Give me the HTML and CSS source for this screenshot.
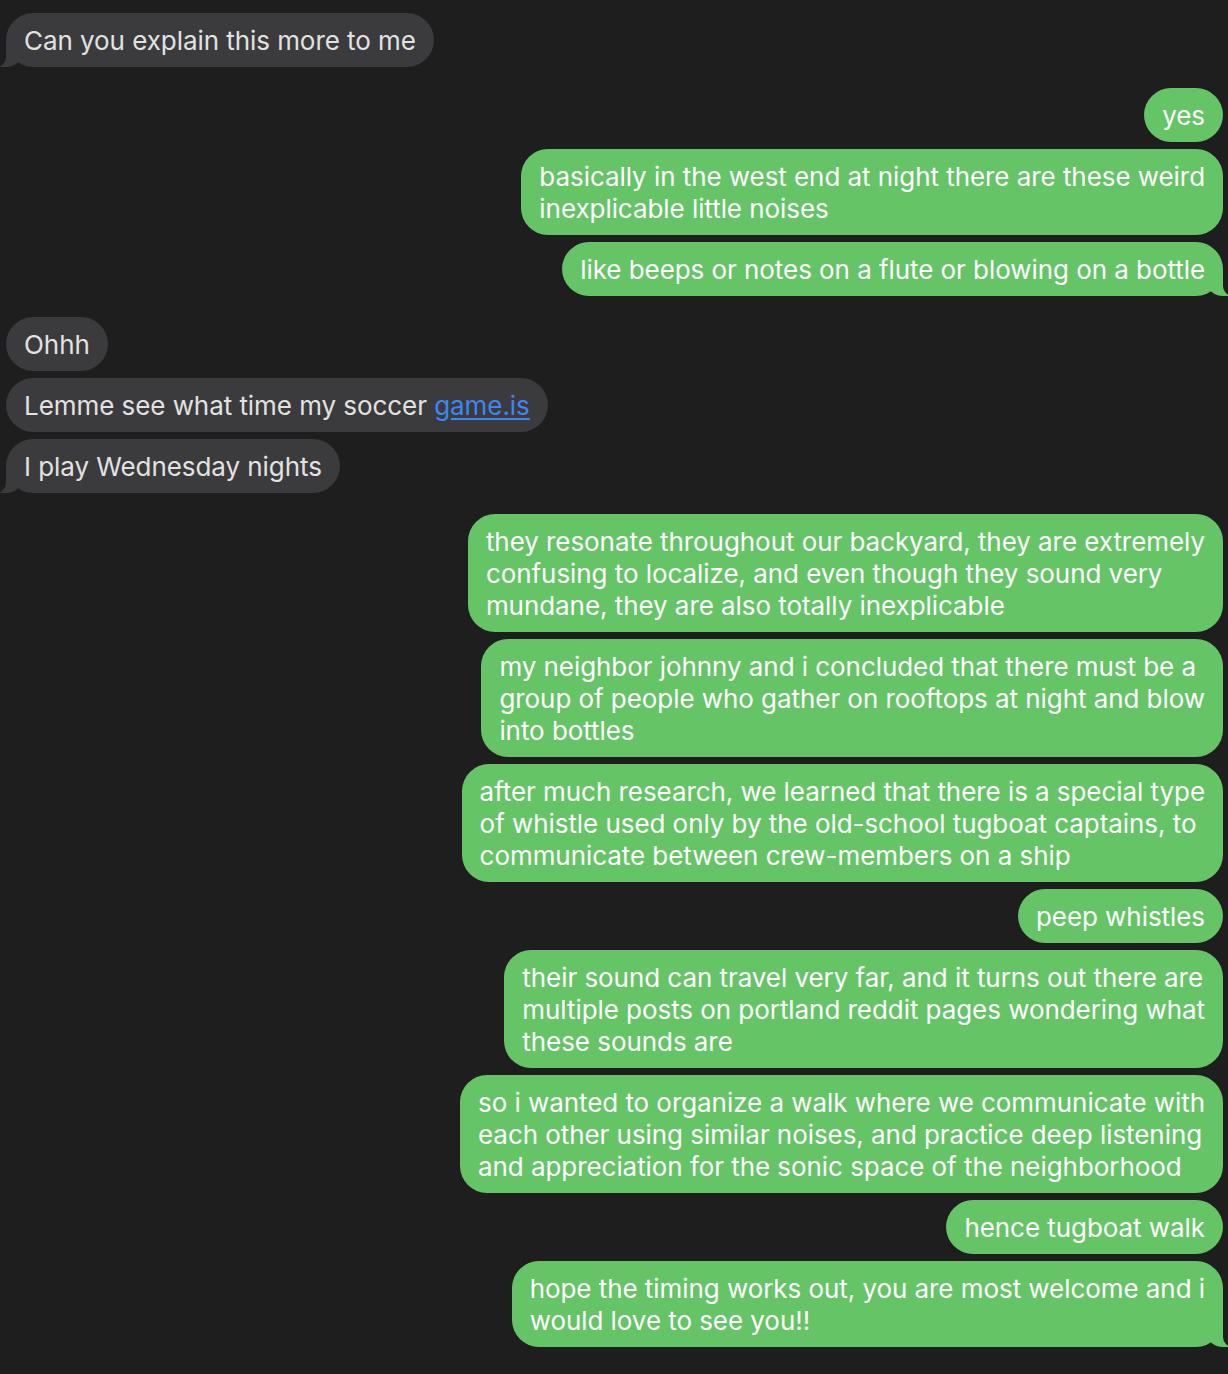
FILE: index.html
```html
<!DOCTYPE html>
<html>
<head>
<meta charset="utf-8">
<link rel="stylesheet" href="styles.css">
</head>
<body>
<div class="chat">
  <div class="group in">
    <div class="bubble tail">Can you explain this more to me</div>
  </div>
  <div class="group out">
    <div class="bubble">yes</div>
    <div class="bubble">basically in the west end at night there are these weird<br>inexplicable little noises</div>
    <div class="bubble tail">like beeps or notes on a flute or blowing on a bottle</div>
  </div>
  <div class="group in">
    <div class="bubble">Ohhh</div>
    <div class="bubble">Lemme see what time my soccer <a class="link" href="#">game.is</a></div>
    <div class="bubble tail">I play Wednesday nights</div>
  </div>
  <div class="group out">
    <div class="bubble">they resonate throughout our backyard, they are extremely<br>confusing to localize, and even though they sound very<br>mundane, they are also totally inexplicable</div>
    <div class="bubble">my neighbor johnny and i concluded that there must be a<br>group of people who gather on rooftops at night and blow<br>into bottles</div>
    <div class="bubble">after much research, we learned that there is a special type<br>of whistle used only by the old-school tugboat captains, to<br>communicate between crew-members on a ship</div>
    <div class="bubble">peep whistles</div>
    <div class="bubble">their sound can travel very far, and it turns out there are<br>multiple posts on portland reddit pages wondering what<br>these sounds are</div>
    <div class="bubble">so i wanted to organize a walk where we communicate with<br>each other using similar noises, and practice deep listening<br>and appreciation for the sonic space of the neighborhood</div>
    <div class="bubble">hence tugboat walk</div>
    <div class="bubble tail">hope the timing works out, you are most welcome and i<br>would love to see you!!</div>
  </div>
</div>
</body>
</html>
```
FILE: styles.css
```css
html, body {
  margin: 0;
  padding: 0;
  background: #1e1e1e;
}
body {
  font-family: Inter, "Noto Sans", sans-serif;
  font-size: 26px;
  line-height: 32px;
  -webkit-font-smoothing: antialiased;
}
.chat {
  display: flex;
  flex-direction: column;
  gap: 21px;
  padding: 13px 5px 20px 6px;
}
.group {
  display: flex;
  flex-direction: column;
  gap: 7px;
}
.group.in { align-items: flex-start; }
.group.out { align-items: flex-end; }
.bubble {
  position: relative;
  padding: 12px 18px 10px;
  border-radius: 27px;
  white-space: nowrap;
  letter-spacing: -0.06px;
}
.in .bubble {
  background: #3b3b3d;
  color: #e2e2e2;
}
.out .bubble {
  background: #65c466;
  color: #ffffff;
}
.link {
  color: #3d86f5;
  text-decoration: underline;
  text-underline-offset: 3px;
}
.bubble.tail::before,
.bubble.tail::after {
  content: "";
  position: absolute;
  bottom: 0;
  height: 26px;
}
.out .bubble.tail::before {
  right: -6px;
  width: 22px;
  background: #65c466;
  border-bottom-left-radius: 16px 14px;
}
.out .bubble.tail::after {
  right: -14px;
  width: 14px;
  background: #1e1e1e;
  border-bottom-left-radius: 10px;
}
.in .bubble.tail::before {
  left: -6px;
  width: 22px;
  background: #3b3b3d;
  border-bottom-right-radius: 16px 14px;
}
.in .bubble.tail::after {
  left: -14px;
  width: 14px;
  background: #1e1e1e;
  border-bottom-right-radius: 10px;
}
```
